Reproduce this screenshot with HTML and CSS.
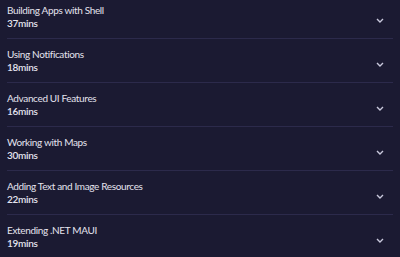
FILE: index.html
```html
<!DOCTYPE html>
<html lang="en">
<head>
    <meta charset="UTF-8">
    <meta name="viewport" content="width=device-width, initial-scale=1.0">
    <title>Course Modules</title>
    <link rel="stylesheet" href="styles.css">
</head>
<body>
    <ul class="modules">
        <li class="module">
            <div class="info">
                <div class="title">Building Apps with Shell</div>
                <div class="duration">37mins</div>
            </div>
            <svg class="chevron" width="8" height="5" viewBox="0 0 8 5"><path d="M1 1l3 3 3-3" fill="none" stroke="#c9c8dc" stroke-width="1.4"/></svg>
        </li>
        <li class="module">
            <div class="info">
                <div class="title">Using Notifications</div>
                <div class="duration">18mins</div>
            </div>
            <svg class="chevron" width="8" height="5" viewBox="0 0 8 5"><path d="M1 1l3 3 3-3" fill="none" stroke="#c9c8dc" stroke-width="1.4"/></svg>
        </li>
        <li class="module">
            <div class="info">
                <div class="title">Advanced UI Features</div>
                <div class="duration">16mins</div>
            </div>
            <svg class="chevron" width="8" height="5" viewBox="0 0 8 5"><path d="M1 1l3 3 3-3" fill="none" stroke="#c9c8dc" stroke-width="1.4"/></svg>
        </li>
        <li class="module">
            <div class="info">
                <div class="title">Working with Maps</div>
                <div class="duration">30mins</div>
            </div>
            <svg class="chevron" width="8" height="5" viewBox="0 0 8 5"><path d="M1 1l3 3 3-3" fill="none" stroke="#c9c8dc" stroke-width="1.4"/></svg>
        </li>
        <li class="module">
            <div class="info">
                <div class="title">Adding Text and Image Resources</div>
                <div class="duration">22mins</div>
            </div>
            <svg class="chevron" width="8" height="5" viewBox="0 0 8 5"><path d="M1 1l3 3 3-3" fill="none" stroke="#c9c8dc" stroke-width="1.4"/></svg>
        </li>
        <li class="module">
            <div class="info">
                <div class="title">Extending .NET MAUI</div>
                <div class="duration">19mins</div>
            </div>
            <svg class="chevron" width="8" height="5" viewBox="0 0 8 5"><path d="M1 1l3 3 3-3" fill="none" stroke="#c9c8dc" stroke-width="1.4"/></svg>
        </li>
    </ul>
</body>
</html>
```

FILE: styles.css
```css
body {
    margin: 0;
    background-color: #1b1a32;
    font-family: "Lato", "Noto Sans", sans-serif;
    color: #e4e3ee;
    overflow: hidden;
}
.modules {
    list-style: none;
    margin: -5px 7px 0 7px;
    padding: 0;
}
.module {
    display: flex;
    align-items: center;
    justify-content: space-between;
    padding: 9px 0 9px 0;
    border-bottom: 1px solid #2c2a4b;
}
.title {
    font-size: 10px;
    line-height: 13px;
    letter-spacing: -0.35px;
}
.duration {
    font-size: 10px;
    line-height: 12px;
    font-weight: 600;
    letter-spacing: -0.3px;
}
.chevron {
    margin-right: 9px;
    margin-top: 8px;
}
```
